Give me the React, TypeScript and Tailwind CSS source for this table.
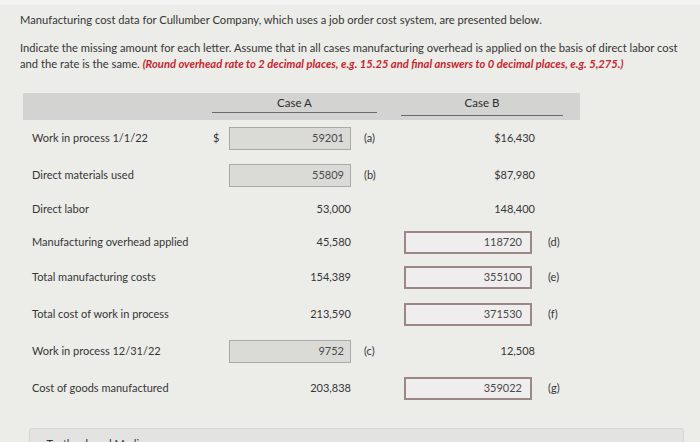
const rows = [
  { label: 'Work in process 1/1/22', h: 'h-[37px]', dollar: true, a: { input: true, value: '59201', mark: '(a)' }, b: { text: '$16,430' } },
  { label: 'Direct materials used', h: 'h-[36px]', a: { input: true, value: '55809', mark: '(b)' }, b: { text: '$87,980' } },
  { label: 'Direct labor', h: 'h-[32px]', a: { text: '53,000' }, b: { text: '148,400' } },
  { label: 'Manufacturing overhead applied', h: 'h-[34px]', a: { text: '45,580' }, b: { input: true, value: '118720', mark: '(d)' } },
  { label: 'Total manufacturing costs', h: 'h-[36px]', a: { text: '154,389' }, b: { input: true, value: '355100', mark: '(e)' } },
  { label: 'Total cost of work in process', h: 'h-[38px]', a: { text: '213,590' }, b: { input: true, value: '371530', mark: '(f)' } },
  { label: 'Work in process 12/31/22', h: 'h-[37px]', a: { input: true, value: '9752', mark: '(c)' }, b: { text: '12,508' } },
  { label: 'Cost of goods manufactured', h: 'h-[36px]', a: { text: '203,838' }, b: { input: true, value: '359022', mark: '(g)' } },
];

type Cell = { input?: boolean; value?: string; text?: string; mark?: string };

function CaseA({ cell }: { cell: Cell }) {
  return (
    <>
      <div className="w-[126px] flex justify-end">
        {cell.input ? (
          <div className="w-[122px] h-[23px] border border-[#a9a9a7] bg-[#dadad7] flex items-center justify-end pr-[6px] text-[#4a4a4a]">
            {cell.value}
          </div>
        ) : (
          <span>{cell.text}</span>
        )}
      </div>
      <div className="w-[47px] pl-[13px]">{cell.mark}</div>
    </>
  );
}

function CaseB({ cell }: { cell: Cell }) {
  return (
    <>
      <div className="w-[138px] flex justify-end">
        {cell.input ? (
          <div className="mr-[4px] w-[128px] h-[23px] border-2 border-[#9d8686] bg-[#efeded] flex items-center justify-end pr-[8px] text-[#4a4a4a]">
            {cell.value}
          </div>
        ) : (
          <span className="pr-[1px]">{cell.text}</span>
        )}
      </div>
      <div className="pl-[12px]">{cell.mark}</div>
    </>
  );
}

export default function App() {
  return (
    <div
      className="w-[700px] h-[442px] overflow-hidden bg-[#ecece9] text-[#363636] text-[11px]"
      style={{ fontFamily: 'Lato, "Open Sans", sans-serif' }}
    >
      <div className="h-[5px] bg-[#f3f3f1]" />
      <div className="pl-[20px] pt-[7px] leading-[16px] text-[11.2px] whitespace-nowrap">
        <p>Manufacturing cost data for Cullumber Company, which uses a job order cost system, are presented below.</p>
        <p className="mt-[12px]">
          Indicate the missing amount for each letter. Assume that in all cases manufacturing overhead is applied on the basis of direct labor cost
          <br />
          and the rate is the same.{' '}
          <span className="font-bold italic text-[#c4262e]">
            (Round overhead rate to 2 decimal places, e.g. 15.25 and final answers to 0 decimal places, e.g. 5,275.)
          </span>
        </p>
      </div>

      <div className="ml-[23px] mt-[21px] w-[557px] h-[27px] bg-[#d3d3d1] flex items-end pb-[7px] text-[11.5px]">
        <div className="w-[189px]" />
        <div className="w-[165px] border-b border-[#6a6a6a] text-center leading-[18px] text-[#2e2e2e]">Case A</div>
        <div className="w-[24px]" />
        <div className="w-[162px] border-b border-[#6a6a6a] text-center leading-[18px] text-[#2e2e2e] -mb-[3px] pb-[3px]">Case B</div>
      </div>

      <div className="ml-[20px]">
        {rows.map((r) => (
          <div key={r.label} className={`${r.h} flex items-center`}>
            <div className="w-[185px] pl-[12px]">{r.label}</div>
            <div className="w-[20px] pl-[8px]">{r.dollar ? '$' : ''}</div>
            <CaseA cell={r.a} />
            <CaseB cell={r.b} />
          </div>
        ))}
      </div>

      <div className="ml-[29px] mt-[22px] w-[655px] h-[30px] rounded-[3px] border border-[#d6d6d4] bg-[#e3e3e1] pl-[12px] pt-[7px]">
        eTextbook and Media
      </div>
    </div>
  );
}
